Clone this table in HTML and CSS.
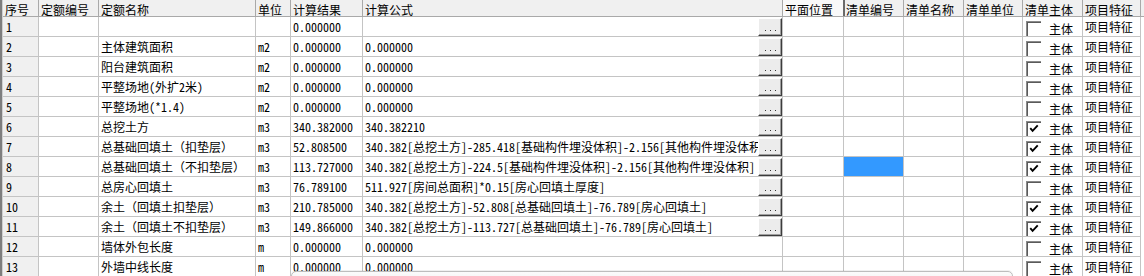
FILE: index.html
```html
<!DOCTYPE html>
<html lang="zh-CN">
<head>
<meta charset="utf-8">
<title>工程量表</title>
<link rel="stylesheet" href="styles.css">
</head>
<body>
<div class="sheet">
  <div class="grid">
    <div class="c h">序号</div>
    <div class="c h">定额编号</div>
    <div class="c h">定额名称</div>
    <div class="c h">单位</div>
    <div class="c h">计算结果</div>
    <div class="c h">计算公式</div>
    <div class="c h h-hot">平面位置</div>
    <div class="c h h-sort">清单编号</div>
    <div class="c h">清单名称</div>
    <div class="c h">清单单位</div>
    <div class="c h">清单主体</div>
    <div class="c h">项目特征</div>
    <div class="c h fill"></div>

    <div class="c num">1</div><div class="c"></div><div class="c"></div><div class="c"></div><div class="c">0.000000</div>
    <div class="c f"><span class="ft"></span><span class="btn"><i></i><i></i><i></i></span></div>
    <div class="c"></div><div class="c"></div><div class="c"></div><div class="c"></div>
    <div class="c chk"><span class="box"></span><span>主体</span></div><div class="c">项目特征</div><div class="c fill"></div>

    <div class="c num">2</div><div class="c"></div><div class="c">主体建筑面积</div><div class="c">m2</div><div class="c">0.000000</div>
    <div class="c f"><span class="ft">0.000000</span><span class="btn"><i></i><i></i><i></i></span></div>
    <div class="c"></div><div class="c"></div><div class="c"></div><div class="c"></div>
    <div class="c chk"><span class="box"></span><span>主体</span></div><div class="c">项目特征</div><div class="c fill"></div>

    <div class="c num">3</div><div class="c"></div><div class="c">阳台建筑面积</div><div class="c">m2</div><div class="c">0.000000</div>
    <div class="c f"><span class="ft">0.000000</span><span class="btn"><i></i><i></i><i></i></span></div>
    <div class="c"></div><div class="c"></div><div class="c"></div><div class="c"></div>
    <div class="c chk"><span class="box"></span><span>主体</span></div><div class="c">项目特征</div><div class="c fill"></div>

    <div class="c num">4</div><div class="c"></div><div class="c">平整场地(外扩2米)</div><div class="c">m2</div><div class="c">0.000000</div>
    <div class="c f"><span class="ft">0.000000</span><span class="btn"><i></i><i></i><i></i></span></div>
    <div class="c"></div><div class="c"></div><div class="c"></div><div class="c"></div>
    <div class="c chk"><span class="box"></span><span>主体</span></div><div class="c">项目特征</div><div class="c fill"></div>

    <div class="c num">5</div><div class="c"></div><div class="c">平整场地(*1.4)</div><div class="c">m2</div><div class="c">0.000000</div>
    <div class="c f"><span class="ft">0.000000</span><span class="btn"><i></i><i></i><i></i></span></div>
    <div class="c"></div><div class="c"></div><div class="c"></div><div class="c"></div>
    <div class="c chk"><span class="box"></span><span>主体</span></div><div class="c">项目特征</div><div class="c fill"></div>

    <div class="c num">6</div><div class="c"></div><div class="c">总挖土方</div><div class="c">m3</div><div class="c">340.382000</div>
    <div class="c f"><span class="ft">340.382210</span><span class="btn"><i></i><i></i><i></i></span></div>
    <div class="c"></div><div class="c"></div><div class="c"></div><div class="c"></div>
    <div class="c chk"><span class="box on"><svg viewBox="0 0 15 15"><polyline points="3.5,6.5 6,9.5 11.5,3.5"/></svg></span><span>主体</span></div><div class="c">项目特征</div><div class="c fill"></div>

    <div class="c num">7</div><div class="c"></div><div class="c">总基础回填土（扣垫层）</div><div class="c">m3</div><div class="c">52.808500</div>
    <div class="c f"><span class="ft">340.382[总挖土方]-285.418[基础构件埋没体积]-2.156[其他构件埋没体积]</span><span class="btn"><i></i><i></i><i></i></span></div>
    <div class="c"></div><div class="c"></div><div class="c"></div><div class="c"></div>
    <div class="c chk"><span class="box on"><svg viewBox="0 0 15 15"><polyline points="3.5,6.5 6,9.5 11.5,3.5"/></svg></span><span>主体</span></div><div class="c">项目特征</div><div class="c fill"></div>

    <div class="c num">8</div><div class="c"></div><div class="c">总基础回填土（不扣垫层）</div><div class="c">m3</div><div class="c">113.727000</div>
    <div class="c f"><span class="ft">340.382[总挖土方]-224.5[基础构件埋没体积]-2.156[其他构件埋没体积]</span><span class="btn"><i></i><i></i><i></i></span></div>
    <div class="c"></div><div class="c sel"></div><div class="c"></div><div class="c"></div>
    <div class="c chk"><span class="box on"><svg viewBox="0 0 15 15"><polyline points="3.5,6.5 6,9.5 11.5,3.5"/></svg></span><span>主体</span></div><div class="c">项目特征</div><div class="c fill"></div>

    <div class="c num">9</div><div class="c"></div><div class="c">总房心回填土</div><div class="c">m3</div><div class="c">76.789100</div>
    <div class="c f"><span class="ft">511.927[房间总面积]*0.15[房心回填土厚度]</span><span class="btn"><i></i><i></i><i></i></span></div>
    <div class="c"></div><div class="c"></div><div class="c"></div><div class="c"></div>
    <div class="c chk"><span class="box"></span><span>主体</span></div><div class="c">项目特征</div><div class="c fill"></div>

    <div class="c num">10</div><div class="c"></div><div class="c">余土（回填土扣垫层）</div><div class="c">m3</div><div class="c">210.785000</div>
    <div class="c f"><span class="ft">340.382[总挖土方]-52.808[总基础回填土]-76.789[房心回填土]</span><span class="btn"><i></i><i></i><i></i></span></div>
    <div class="c"></div><div class="c"></div><div class="c"></div><div class="c"></div>
    <div class="c chk"><span class="box on"><svg viewBox="0 0 15 15"><polyline points="3.5,6.5 6,9.5 11.5,3.5"/></svg></span><span>主体</span></div><div class="c">项目特征</div><div class="c fill"></div>

    <div class="c num">11</div><div class="c"></div><div class="c">余土（回填土不扣垫层）</div><div class="c">m3</div><div class="c">149.866000</div>
    <div class="c f"><span class="ft">340.382[总挖土方]-113.727[总基础回填土]-76.789[房心回填土]</span><span class="btn"><i></i><i></i><i></i></span></div>
    <div class="c"></div><div class="c"></div><div class="c"></div><div class="c"></div>
    <div class="c chk"><span class="box on"><svg viewBox="0 0 15 15"><polyline points="3.5,6.5 6,9.5 11.5,3.5"/></svg></span><span>主体</span></div><div class="c">项目特征</div><div class="c fill"></div>

    <div class="c num">12</div><div class="c"></div><div class="c">墙体外包长度</div><div class="c">m</div><div class="c">0.000000</div>
    <div class="c f"><span class="ft">0.000000</span></div>
    <div class="c"></div><div class="c"></div><div class="c"></div><div class="c"></div>
    <div class="c chk"><span class="box"></span><span>主体</span></div><div class="c">项目特征</div><div class="c fill"></div>

    <div class="c num">13</div><div class="c"></div><div class="c">外墙中线长度</div><div class="c">m</div><div class="c">0.000000</div>
    <div class="c f"><span class="ft">0.000000</span></div>
    <div class="c"></div><div class="c"></div><div class="c"></div><div class="c"></div>
    <div class="c chk"><span class="box"></span><span>主体</span></div><div class="c">项目特征</div><div class="c fill"></div>
  </div>
  <div class="popup"></div>
</div>
</body>
</html>
```

FILE: styles.css
```css
html, body {
  margin: 0;
  padding: 0;
  background: #ffffff;
}

body {
  width: 1144px;
  height: 276px;
  overflow: hidden;
  font-family: "Noto Sans Mono CJK SC", "Noto Sans CJK SC", monospace;
  font-size: 12px;
  color: #000000;
}

.sheet {
  position: relative;
  width: 1144px;
  height: 276px;
}

.grid {
  display: grid;
  grid-template-columns: 36px 60px 157px 35px 72px 420px 61px 60px 60px 59px 60px 58px 1fr;
  grid-template-rows: 17px repeat(13, 20px);
  border-left: 2px solid #7e7e7e;
  padding-left: 1px;
  box-shadow: inset 1px 0 0 #cfcfcf;
  height: 276px;
  box-sizing: border-box;
  overflow: hidden;
}

.c {
  box-sizing: border-box;
  border-right: 1px solid #c4c4c4;
  border-bottom: 1px solid #c4c4c4;
  padding-left: 2px;
  display: flex;
  align-items: center;
  white-space: nowrap;
  overflow: hidden;
  min-width: 0;
  line-height: 15px;
}

.h {
  background: #f0f0f0;
  border-right-color: #a9a9a9;
  border-bottom-color: #a9a9a9;
  padding-top: 2px;
}

.h-hot {
  background: #f9f9f9;
}

.h-sort {
  box-shadow: inset 2px 0 0 #6a6a6a;
  margin-left: -1px;
  padding-left: 3px;
}

.fill {
  border-right: none;
  border-bottom: none;
}

.h.fill {
  border-bottom: 1px solid #a9a9a9;
}

.num {
  background: #f0f0f0;
  padding-left: 3px;
}

.sel {
  background: #3399ff;
}

.f {
  padding-right: 0;
  align-items: stretch;
}

.ft {
  flex: 1;
  min-width: 0;
  overflow: hidden;
  display: flex;
  align-items: center;
}

.btn {
  flex: none;
  width: 24px;
  height: 18px;
  margin-top: 1px;
  box-sizing: border-box;
  background: #ececec;
  border-top: 1px solid #ffffff;
  border-left: 1px solid #ffffff;
  border-right: 1px solid #3c3c3c;
  border-bottom: 1px solid #3c3c3c;
  box-shadow: inset -1px -1px 0 #a0a0a0;
  display: flex;
  justify-content: center;
  align-items: flex-end;
  gap: 4px;
  padding-bottom: 4px;
}

.btn i {
  display: block;
  width: 1px;
  height: 1px;
  background: #333333;
}

.chk {
  align-items: flex-start;
  padding-left: 3px;
  padding-top: 4px;
}

.box {
  flex: none;
  width: 15px;
  height: 15px;
  box-sizing: border-box;
  background: #ffffff;
  border-top: 1px solid #8a8a8a;
  border-left: 1px solid #8a8a8a;
  box-shadow: inset 1px 1px 0 #5a5a5a;
  margin-right: 8px;
}

.box svg {
  display: block;
  width: 14px;
  height: 14px;
}

.box polyline {
  fill: none;
  stroke: #000000;
  stroke-width: 2;
}

.popup {
  position: absolute;
  left: 291px;
  top: 271px;
  width: 722px;
  height: 14px;
  box-sizing: border-box;
  border: 1px solid #bdbdbd;
  border-radius: 5px 5px 0 0;
  background: linear-gradient(#fbfbfb, #f1f1f1);
  box-shadow: 0 -1px 0 rgba(0, 0, 0, 0.06);
}
```
